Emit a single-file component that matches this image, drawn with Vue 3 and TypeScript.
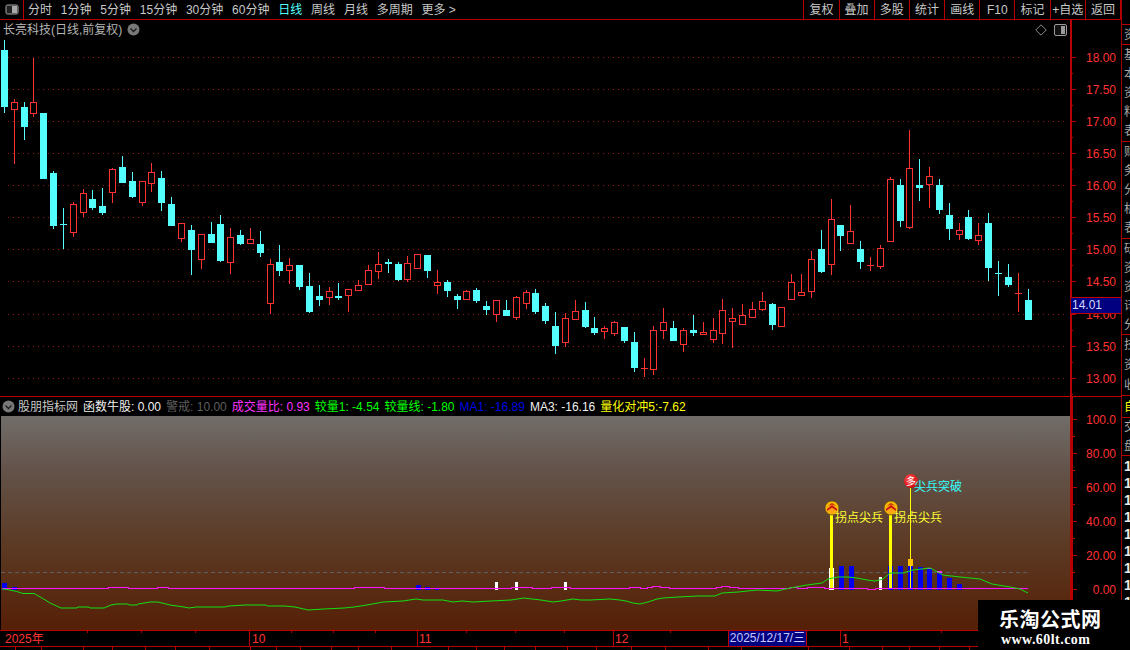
<script setup lang="ts">
type Candle = [number, number, number, number, number]
// top, bottom, wick top, wick bottom, 1 = rising (red outline), 0 = falling (cyan)
const raw: Candle[] = [
  [50,107,40,113,0],[102,109,99,164,1],[107,127,102,140,0],[102,113,58,117,1],[113,179,113,179,0],
  [173,226,171,229,0],[224,224,208,249,0],[204,232,202,237,1],[193,212,189,217,1],[199,208,190,210,0],
  [206,213,188,215,0],[169,192,168,203,1],[167,183,156,183,0],[181,197,172,198,0],[181,202,181,206,1],
  [172,183,163,192,1],[178,203,171,211,0],[204,226,197,226,0],[223,238,223,242,1],[230,250,225,275,0],
  [234,259,234,269,1],[234,243,222,243,0],[224,261,215,262,0],[237,262,228,274,1],[235,244,230,245,0],
  [239,243,228,243,1],[244,253,231,257,0],[264,303,259,314,1],[262,271,245,276,0],[265,270,258,284,1],
  [265,287,265,290,0],[286,312,273,313,0],[296,300,285,306,0],[291,297,287,305,1],[296,298,283,300,0],
  [289,295,289,312,1],[285,290,280,291,1],[270,284,265,284,1],[264,271,252,279,1],[262,264,259,273,0],
  [264,280,262,281,0],[263,279,256,282,1],[254,268,254,268,1],[255,271,255,278,0],[282,285,270,294,1],
  [282,291,280,297,0],[296,300,294,309,0],[291,299,290,299,1],[290,301,288,303,0],[306,310,301,315,0],
  [300,314,300,322,1],[310,316,300,316,0],[297,317,296,320,1],[292,303,290,309,1],[293,312,289,314,0],
  [306,321,303,324,0],[326,346,312,354,0],[318,342,313,347,1],[311,319,300,319,1],[310,327,302,328,0],
  [328,333,317,335,0],[328,331,326,339,1],[322,333,321,336,1],[327,341,327,343,0],[342,368,332,372,0],
  [368,368,358,377,1],[330,369,326,375,1],[322,330,308,339,1],[328,341,321,341,0],[330,344,328,352,1],
  [330,333,315,336,0],[332,334,322,334,1],[330,339,318,343,1],[310,333,299,344,1],[318,321,308,348,1],
  [315,324,304,325,1],[309,317,302,318,1],[301,309,292,311,1],[304,325,303,330,0],[307,326,307,327,1],
  [282,299,274,299,1],[292,295,274,296,1],[259,291,251,298,1],[249,272,230,273,0],[219,264,199,275,1],
  [225,236,225,251,0],[231,243,205,244,1],[249,262,241,269,0],[265,265,257,271,1],[248,266,245,269,1],
  [179,241,177,242,1],[185,221,179,227,0],[168,227,130,229,1],[185,188,159,201,0],[176,184,167,208,1],
  [185,210,179,214,0],[215,229,203,240,0],[230,234,223,240,1],[217,239,210,240,0],[235,240,223,245,1],
  [223,268,213,281,0],[273,273,261,296,0],[277,285,264,287,0],[293,293,273,312,1],[300,320,289,320,0]
]
const candles = raw.map((c, i) => {
  const px = Math.floor(4.33 + i * 9.843)
  return { px, top: c[0], bottom: c[1], wt: c[2], wb: c[3], up: c[4] === 1, doji: c[0] === c[1] }
})
const gridY = [57.5, 89.5, 121.5, 153.5, 185.5, 217.5, 249.5, 281.5, 314.5, 346.5, 378.5]
const priceLabels = ['18.00','17.50','17.00','16.50','16.00','15.50','15.00','14.50','14.00','13.50','13.00']
const priceTicks = gridY.map((y, i) => ({ y, label: priceLabels[i] }))
const indTicks = [['100.0',419.5],['80.00',453.5],['60.00',487.5],['40.00',521.5],['20.00',555.5],['0.00',589.5]].map(t => ({ label: t[0] as string, y: t[1] as number }))

const tabs = [
  { t: '分时' },{ t: '1分钟' },{ t: '5分钟' },{ t: '15分钟' },{ t: '30分钟' },{ t: '60分钟' },
  { t: '日线', on: true },{ t: '周线' },{ t: '月线' },{ t: '多周期' },{ t: '更多 >' }
]
const buttons = ['复权','叠加','多股','统计','画线','F10','标记','+自选','返回']
const legend = [
  { t: '股朋指标网', c: '#c8c8c8' },{ t: '函数牛股: 0.00', c: '#f0f0f0' },{ t: '警戒: 10.00', c: '#5e5e5e' },
  { t: '成交量比: 0.93', c: '#ff32ff' },{ t: '较量1: -4.54', c: '#00ff00' },{ t: '较量线: -1.80', c: '#00ff00' },
  { t: 'MA1: -16.89', c: '#0000e6' },{ t: 'MA3: -16.16', c: '#f0f0f0' },{ t: '量化对冲5:-7.62', c: '#ffff00' }
]
const greenPts = '2,589 7,589.5 15,591 23,593.5 34,593.5 42,598 50,603 61,608 77,608 78,607 89,607 90,608 104,608 111,605 117,604 128,604 129,605 137,605 138,604 150,602 158,602 170,605 184,607 189,608 196,607 224,607 229,606 245,605 266,605 267,606 285,606 295,607 308,610 324,609 344,608 354,607 367,605 383,602 403,601 416,599 423,600 443,600 453,602 462,601 473,602 491,601 511,600 524,598 532,599 541,600 553,602 561,601 573,599 581,600 590,600 610,599 620,600 626,601 633,603 640,604 648,602 657,599 663,598 678,597 698,596 715,596 722,593 738,592 757,590 777,591 790,588 807,585 822,583 828,579 838,577 848,577 857,578 867,580 875,581 883,579 890,573 903,573 913,570 930,568 943,575 960,577 980,579 992,584 1010,587 1020,589 1028,593'
const magentaPts = '2,588.5 108,588.5 108,587.5 128,587.5 128,588.5 157,588.5 157,587.5 168,587.5 168,588.5 354,588.5 354,587.5 384,587.5 384,588.5 511,588.5 511,587.5 532,587.5 532,588.5 551,588.5 551,587.5 570,587.5 570,588.5 629,588.5 629,587.5 640,587.5 640,588.5 647,588.5 647,587.5 652,587.5 652,586.5 660,586.5 660,587.5 669,587.5 669,588.5 716,588.5 716,587.5 721,587.5 721,586.5 729,586.5 729,587.5 738,587.5 738,588.5 790,588.5 790,587.5 797,587.5 797,588.5 807,588.5 807,587.5 824,587.5 824,588.5 867,588.5 867,589.5 875,589.5 875,588.5 1028,588.5'
const bars = [
  { x: 2, w: 5, y: 583, c: '#0000f0' },{ x: 12, w: 5, y: 587, c: '#0000f0' },{ x: 416, w: 5, y: 585, c: '#0000f0' },
  { x: 425, w: 5, y: 587, c: '#0000f0' },{ x: 435, w: 4, y: 589, c: '#0000f0' },
  { x: 495, w: 3, y: 582, c: '#fff' },{ x: 515, w: 3, y: 582, c: '#fff' },{ x: 564, w: 3, y: 582, c: '#fff' },
  { x: 829, w: 5, y: 568, c: '#fff' },{ x: 839, w: 5, y: 566, c: '#0000f0' },{ x: 849, w: 5, y: 566, c: '#0000f0' },
  { x: 879, w: 3, y: 577, c: '#fff' },{ x: 888, w: 5, y: 566, c: '#0000f0' },{ x: 898, w: 5, y: 566, c: '#0000f0' },
  { x: 908, w: 5, y: 566, c: '#0000f0' },{ x: 918, w: 5, y: 567, c: '#0000f0' },{ x: 927, w: 5, y: 568, c: '#0000f0' },
  { x: 937, w: 5, y: 572, c: '#0000f0' },{ x: 947, w: 5, y: 578, c: '#0000f0' },{ x: 957, w: 5, y: 584, c: '#0000f0' }
]
const yellowMarks = [{ cx: 832, label: 835 }, { cx: 891, label: 894 }]
const sideCells = [
  { h: 20, chars: ['资'] },{ h: 97, chars: ['基','本','资','料','表'] },{ h: 97, chars: ['财','务','分','析','表'] },
  { h: 96, chars: ['研','资','资','讯','分'] },{ h: 61, chars: ['技','资','收'] },
  { h: 22, chars: ['自'], c: '#ffff00' },{ h: 38, chars: ['交','盘'] }
]
const digits = Array.from({ length: 12 }, (_, i) => i)
const minorTicks = [87, 141, 195, 291, 333, 375, 466, 515, 564, 670, 941, 1000]
const majorTicks = [
  { x: 249, l: '10' },{ x: 417, l: '11' },{ x: 613, l: '12' },{ x: 840, l: '1' }
]
const stripCells = [16, 26, 42, 29, 33, 30, 34, 41, 26, 24, 31, 27, 33, 57, 28, 28, 31, 32, 29, 35, 34, 43, 33, 67, 41, 33, 27, 30, 30, 60]
</script>

<template>
  <div class="app">
    <div class="main">
      <header class="toolbar">
        <div class="tool-left">
          <span class="layout-btn"><svg width="14" height="11" viewBox="0 0 14 11"><rect x="1" y="1" width="12" height="9" rx="1.5" fill="#222" stroke="#a8a8a8"/><rect x="7" y="2" width="5" height="7" fill="#a8a8a8"/></svg></span>
          <nav class="tabs"><span v-for="t in tabs" :key="t.t" :class="{ on: t.on }">{{ t.t }}</span></nav>
        </div>
        <div class="tool-right"><span v-for="b in buttons" :key="b" class="tbtn">{{ b }}</span></div>
      </header>

      <section class="price-pane">
        <div class="canvas">
          <div class="title">长亮科技(日线,前复权)
            <svg width="13" height="13" viewBox="0 0 13 13"><circle cx="6.5" cy="6.5" r="6" fill="#787878"/><path d="M3.5 5.5 6.5 8.5 9.5 5.5" fill="none" stroke="#1c1c1c" stroke-width="1.3"/></svg>
          </div>
          <div class="corner">
            <svg width="12" height="12" viewBox="0 0 12 12"><path d="M6 .8 11.2 6 6 11.2.8 6Z" fill="none" stroke="#8a8a8a"/></svg>
            <svg width="13" height="12" viewBox="0 0 13 12"><rect x=".5" y=".5" width="12" height="11" rx="1.5" fill="#111" stroke="#9a9a9a"/><rect x="7" y="2" width="4" height="8" fill="#9a9a9a"/></svg>
          </div>
          <svg class="chart" width="1070" height="376" viewBox="0 20 1070 376" shape-rendering="crispEdges">
            <line v-for="y in gridY" :key="y" x1="8" :y1="y" x2="1068" :y2="y" stroke="#8a1818" stroke-dasharray="1 4"/>
            <g v-for="(c, i) in candles" :key="i">
              <template v-if="c.up">
                <line :x1="c.px + .5" :y1="c.wt" :x2="c.px + .5" :y2="c.top" stroke="#ff3232"/>
                <line :x1="c.px + .5" :y1="c.bottom" :x2="c.px + .5" :y2="c.wb" stroke="#ff3232"/>
                <line v-if="c.doji" :x1="c.px - 3" :y1="c.top + .5" :x2="c.px + 4" :y2="c.top + .5" stroke="#ff3232"/>
                <rect v-else :x="c.px - 2.5" :y="c.top + .5" width="6" :height="c.bottom - c.top" fill="#000" stroke="#ff3232"/>
              </template>
              <template v-else>
                <line :x1="c.px + .5" :y1="c.wt" :x2="c.px + .5" :y2="c.wb" stroke="#54ffff"/>
                <line v-if="c.doji" :x1="c.px - 3" :y1="c.top + .5" :x2="c.px + 4" :y2="c.top + .5" stroke="#54ffff"/>
                <rect v-else :x="c.px - 3" :y="c.top" width="7" :height="c.bottom - c.top" fill="#54ffff"/>
              </template>
            </g>
          </svg>
        </div>
        <div class="axis">
          <svg width="51" height="376" viewBox="1070 20 51 376">
            <g v-for="t in priceTicks" :key="t.label">
              <line x1="1071" :y1="t.y" x2="1076" :y2="t.y" stroke="#b80000"/>
              <line x1="1071" :y1="t.y + 16" x2="1073" :y2="t.y + 16" stroke="#b80000"/>
              <text x="1116" :y="t.y + 4.5" text-anchor="end" class="axis-text">{{ t.label }}</text>
            </g>
          </svg>
          <div class="price-tag">14.01</div>
        </div>
      </section>

      <section class="ind-pane">
        <div class="ind-left">
          <div class="legend">
            <svg class="legend-dot" width="13" height="13" viewBox="0 0 13 13"><circle cx="6.5" cy="6.5" r="6" fill="#787878"/><path d="M3.5 5.5 6.5 8.5 9.5 5.5" fill="none" stroke="#1c1c1c" stroke-width="1.3"/></svg>
            <span v-for="l in legend" :key="l.t" :style="{ color: l.c }">{{ l.t }}</span>
          </div>
          <div class="ind-canvas">
            <svg width="1069" height="214" viewBox="1 416 1069 214">
              <defs>
                <radialGradient id="gold" cx=".5" cy=".6" r=".6"><stop offset="0" stop-color="#ff9a1a"/><stop offset="1" stop-color="#f0c000"/></radialGradient>
                <radialGradient id="redball" cx=".4" cy=".35" r=".7"><stop offset="0" stop-color="#ff5050"/><stop offset="1" stop-color="#cc0808"/></radialGradient>
              </defs>
              <line x1="1" y1="572.5" x2="1028" y2="572.5" stroke="#5a6064" stroke-dasharray="4 3"/>
              <g shape-rendering="crispEdges">
                <rect v-for="b in bars" :key="b.x" :x="b.x" :y="b.y" :width="b.w" :height="590 - b.y" :fill="b.c"/>
                <rect x="927" y="568" width="5" height="1" fill="#ff32ff"/>
                <rect x="937" y="571" width="5" height="2" fill="#ff32ff"/>
                <rect x="830" y="515" width="3" height="74" fill="#ffff00"/>
                <rect x="889" y="515" width="3" height="74" fill="#ffff00"/>
                <rect x="910" y="488" width="1" height="101" fill="#ffff00"/>
                <rect x="908" y="559" width="5" height="7" fill="#ffc000"/>
              </g>
              <polyline :points="magentaPts" fill="none" stroke="#ff14ff" shape-rendering="crispEdges"/>
              <polyline :points="greenPts" fill="none" stroke="#12e012"/>
              <g v-for="m in yellowMarks" :key="m.cx">
                <circle :cx="m.cx" cy="508" r="7" fill="url(#gold)" stroke="#5a3a10" stroke-width=".6"/>
                <path :d="`M${m.cx - 5} 509 L${m.cx} 505 L${m.cx + 5} 509 L${m.cx + 5} 511 L${m.cx} 507.5 L${m.cx - 5} 511Z`" fill="#c81010"/>
                <path :d="`M${m.cx - 4} 506 L${m.cx} 503 L${m.cx + 4} 506 L${m.cx} 504.5Z`" fill="#c81010"/>
                <text :x="m.label" y="522" class="mark-text yellow">拐点尖兵</text>
              </g>
              <circle cx="911" cy="481" r="7" fill="url(#redball)"/>
              <text x="911" y="485" text-anchor="middle" class="ball-text">多</text>
              <text x="914" y="491" class="mark-text cyan">尖兵突破</text>
            </svg>
          </div>
        </div>
        <div class="axis ind-axis">
          <svg width="51" height="233" viewBox="1070 397 51 233">
            <g v-for="t in indTicks" :key="t.label">
              <line x1="1072" :y1="t.y" x2="1077" :y2="t.y" stroke="#b80000"/>
              <line x1="1072" :y1="t.y + 17" x2="1075" :y2="t.y + 17" stroke="#b80000"/>
              <text x="1116" :y="t.y + 4" text-anchor="end" class="axis-text">{{ t.label }}</text>
            </g>
          </svg>
        </div>
      </section>

      <section class="time-axis">
        <svg width="1121" height="15" viewBox="0 631 1121 15" shape-rendering="crispEdges">
          <line v-for="x in minorTicks" :key="x" :x1="x + .5" y1="631" :x2="x + .5" y2="633" stroke="#b80000"/>
          <g v-for="m in majorTicks" :key="m.x">
            <line :x1="m.x + .5" y1="631" :x2="m.x + .5" y2="646" stroke="#b80000"/>
          </g>
          <text x="5" y="643" class="time-text">2025年</text>
          <text x="252" y="643" class="time-text">10</text>
          <text x="419" y="643" class="time-text">11</text>
          <text x="615" y="643" class="time-text">12</text>
          <text x="842" y="643" class="time-text">1</text>
        </svg>
        <div class="date-tag">2025/12/17/三</div>
      </section>

      <div class="strip">
        <span v-for="(w, i) in stripCells" :key="i" class="strip-cell" :style="{ width: w + 'px' }"></span>
      </div>
    </div>

    <aside class="side">
      <div class="side-spacer"></div>
      <div v-for="(s, i) in sideCells" :key="i" class="side-cell" :style="{ height: s.h + 'px', color: s.c }">
        <span v-for="(ch, j) in s.chars" :key="j">{{ ch }}</span>
      </div>
      <div class="side-digits"><span v-for="d in digits" :key="d">1</span></div>
    </aside>

    <div class="watermark">
      <div class="wm-title">乐淘公式网</div>
      <div class="wm-url">www.60lt.com</div>
    </div>
  </div>
</template>

<style>
html, body { margin: 0; background: #000; }
</style>

<style scoped>
.app {
  position: relative;
  width: 1130px;
  height: 650px;
  display: flex;
  overflow: hidden;
  background: #000;
  font: 12px/1 "Liberation Sans", "Noto Sans CJK SC", sans-serif;
  color: #c8c8c8;
}
.main { width: 1121px; flex: none; display: flex; flex-direction: column; }
.toolbar {
  height: 19px;
  border-bottom: 1px solid #b80000;
  display: flex;
  justify-content: space-between;
  flex: none;
}
.tool-left { display: flex; align-items: center; }
.layout-btn {
  width: 23px;
  height: 19px;
  border-right: 1px solid #b80000;
  display: flex;
  align-items: center;
  justify-content: center;
  box-sizing: content-box;
}
.tabs { display: flex; gap: 8.8px; padding-left: 4px; white-space: nowrap; }
.tabs .on { color: #54ffff; }
.tool-right { display: grid; grid-template-columns: repeat(9, 35.2px); border-left: 1px solid #b80000; }
.tbtn {
  border-right: 1px solid #b80000;
  display: flex;
  align-items: center;
  justify-content: center;
  white-space: nowrap;
}
.price-pane { height: 376px; display: flex; flex: none; }
.canvas { position: relative; width: 1070px; flex: none; }
.chart { display: block; }
.title {
  position: absolute;
  left: 3px;
  top: 3px;
  display: flex;
  align-items: center;
  gap: 5px;
  color: #b4b4b4;
  white-space: nowrap;
  z-index: 1;
}
.corner {
  position: absolute;
  right: 3px;
  top: 4px;
  display: flex;
  gap: 7px;
  z-index: 1;
}
.axis { position: relative; width: 51px; flex: none; border-left: 0; }
.axis svg { display: block; }
.axis::before {
  content: "";
  position: absolute;
  left: 0;
  top: 0;
  bottom: 0;
  width: 1.5px;
  background: #b80000;
}
.axis-text { fill: #ff3232; font-size: 12px; font-family: "Liberation Sans", sans-serif; }
.price-tag {
  position: absolute;
  left: 1px;
  top: 277px;
  height: 15px;
  background: #000080;
  border-top: 1px solid #c00000;
  border-bottom: 1px solid #c00000;
  color: #d8d8ff;
  line-height: 15px;
  padding-left: 1px;
  box-sizing: content-box;
  width: 49px;
}
.ind-pane { height: 234px; border-top: 1px solid #c00000; display: flex; flex: none; box-sizing: border-box; }
.ind-left { width: 1070px; flex: none; display: flex; flex-direction: column; }
.legend {
  height: 19px;
  display: flex;
  align-items: center;
  gap: 5px;
  padding-left: 2px;
  white-space: nowrap;
  flex: none;
}
.legend-dot { margin-right: -2px; }
.ind-canvas {
  margin-left: 1px;
  height: 214px;
  background: linear-gradient(#716d69, #63534a 25%, #5c3a24 60%, #561f06);
}
.ind-canvas svg { display: block; }
.ind-axis::before { width: 3px; }
.mark-text { font-size: 12px; font-family: "Noto Sans CJK SC", sans-serif; }
.yellow { fill: #ffff32; }
.cyan { fill: #32ffff; }
.ball-text { font-size: 10px; fill: #fff; font-family: "Noto Sans CJK SC", sans-serif; }
.time-axis {
  position: relative;
  height: 17px;
  border-top: 1px solid #b80000;
  border-bottom: 1px solid #b80000;
  box-sizing: border-box;
  flex: none;
}
.time-axis svg { display: block; }
.time-text { fill: #ff3232; font-size: 12px; font-family: "Liberation Sans", "Noto Sans CJK SC", sans-serif; }
.date-tag {
  position: absolute;
  left: 728px;
  top: 0;
  width: 79px;
  height: 15px;
  background: #000080;
  border-left: 1px solid #c00000;
  border-right: 1px solid #c00000;
  box-sizing: border-box;
  color: #c8c8ff;
  text-align: center;
  line-height: 15px;
  white-space: nowrap;
}
.strip { display: flex; height: 3px; overflow: hidden; }
.strip-cell { flex: none; height: 3px; border-right: 1px solid #b80000; box-sizing: border-box; }
.side {
  flex: 1;
  min-width: 0;
  border-left: 1px solid #a00000;
  overflow: hidden;
  display: flex;
  flex-direction: column;
}
.side-spacer { height: 25px; border-bottom: 1px solid #b80000; flex: none; box-sizing: border-box; }
.side-cell {
  border-bottom: 1px solid #b80000;
  box-sizing: border-box;
  display: flex;
  flex-direction: column;
  justify-content: space-around;
  padding-left: 2px;
  overflow: hidden;
  flex: none;
  color: #a8a8a8;
  font-size: 12px;
  white-space: nowrap;
}
.side-digits {
  display: flex;
  flex-direction: column;
  gap: 3px;
  padding: 3px 0 0 2px;
  color: #e8e8e8;
  font-size: 14px;
  font-weight: 700;
}
.watermark {
  position: absolute;
  right: 0;
  bottom: 0;
  width: 152px;
  height: 50px;
  box-sizing: border-box;
  padding: 8px 0 0 21px;
  background: #000;
  display: flex;
  flex-direction: column;
  align-items: flex-start;
  gap: 3px;
  color: #fff;
}
.wm-title { font: 700 20px/22px "Noto Sans CJK SC", sans-serif; letter-spacing: .5px; }
.wm-url { margin-left: 2px; font: 700 14px/14px "Liberation Serif", serif; letter-spacing: .45px; }
</style>
